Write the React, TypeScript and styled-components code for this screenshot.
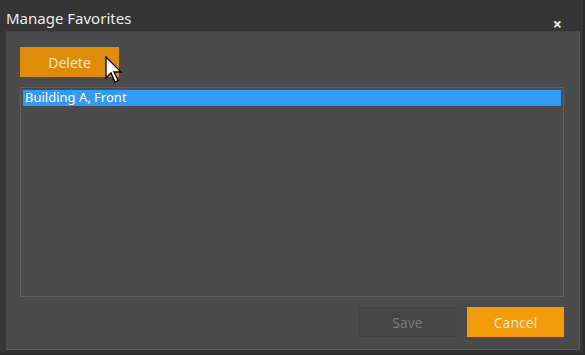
import React, { useState } from 'react';
import styled, { createGlobalStyle } from 'styled-components';

const GlobalStyle = createGlobalStyle`
    html, body {
        margin: 0;
        padding: 0;
        background: #2b2b2b;
    }
    * {
        box-sizing: border-box;
    }
`;

const Window = styled.div`
    width: 585px;
    height: 355px;
    display: flex;
    flex-direction: column;
    background-color: #353535;
    border-right: 2px solid #2a2a2a;
    border-bottom: 2px solid #2a2a2a;
    font-family: "Noto Sans", "Open Sans", sans-serif;
`;

const TitleBar = styled.div`
    height: 31px;
    flex-shrink: 0;
    display: flex;
    align-items: flex-end;
    justify-content: space-between;
    padding: 0 21px 3px 6px;
`;

const Title = styled.div`
    color: #ececec;
    font-size: 15px;
    line-height: 19px;
`;

const CloseButton = styled.div`
    color: #f0f0f0;
    font-size: 16px;
    font-weight: bold;
    line-height: 12px;
    margin-bottom: -2px;
`;

const Body = styled.div`
    flex: 1;
    margin: 0 3px 3px 6px;
    background-color: #4b4b4b;
    border-top: 1px solid #444;
    border-right: 1px solid #5a5a5a;
    border-bottom: 1px solid #5a5a5a;
    padding: 15px 15px 12px 14px;
    display: flex;
    flex-direction: column;
    gap: 10px;
`;

const Toolbar = styled.div`
    position: relative;
    display: flex;
`;

const Button = styled.button<{ $variant: 'orange' | 'accent' | 'disabled' }>`
    width: ${p => (p.$variant === 'orange' ? '99px' : '97px')};
    height: 30px;
    border: none;
    padding: 0;
    font-family: inherit;
    font-size: 14px;
    background-color: ${p =>
        p.$variant === 'orange' ? '#df8c0b' : p.$variant === 'accent' ? '#f39a0d' : '#444444'};
    color: ${p => (p.$variant === 'disabled' ? '#7a7a7a' : '#fbe7c7')};
`;

const ListBox = styled.div`
    flex: 1;
    border: 1px solid #606060;
    padding: 2px;
    display: flex;
    flex-direction: column;
`;

const ListItem = styled.div<{ $selected?: boolean }>`
    height: 16px;
    line-height: 15px;
    padding-left: 2px;
    font-size: 13px;
    color: #ffffff;
    background-color: ${p => (p.$selected ? '#3399ff' : 'transparent')};
`;

const Footer = styled.div`
    display: flex;
    justify-content: flex-end;
    gap: 11px;
`;

const Cursor = styled.svg`
    position: absolute;
    left: 85px;
    top: 9px;
`;

export default function App() {
    const [items] = useState(['Building A, Front']);
    return (
        <>
            <GlobalStyle />
            <Window>
                <TitleBar>
                    <Title>Manage Favorites</Title>
                    <CloseButton>×</CloseButton>
                </TitleBar>
                <Body>
                    <Toolbar>
                        <Button $variant="orange">Delete</Button>
                        <Cursor width="20" height="28" viewBox="0 0 20 28">
                            <path
                                d="M1 1 L1 22 L6 17 L10 26 L13 24.5 L9 16 L16 16 Z"
                                fill="#ffffff"
                                stroke="#000000"
                                strokeWidth="1.3"
                                strokeLinejoin="miter"
                            />
                        </Cursor>
                    </Toolbar>
                    <ListBox>
                        {items.map((it, i) => (
                            <ListItem key={it} $selected={i === 0}>{it}</ListItem>
                        ))}
                    </ListBox>
                    <Footer>
                        <Button $variant="disabled">Save</Button>
                        <Button $variant="accent">Cancel</Button>
                    </Footer>
                </Body>
            </Window>
        </>
    );
}
